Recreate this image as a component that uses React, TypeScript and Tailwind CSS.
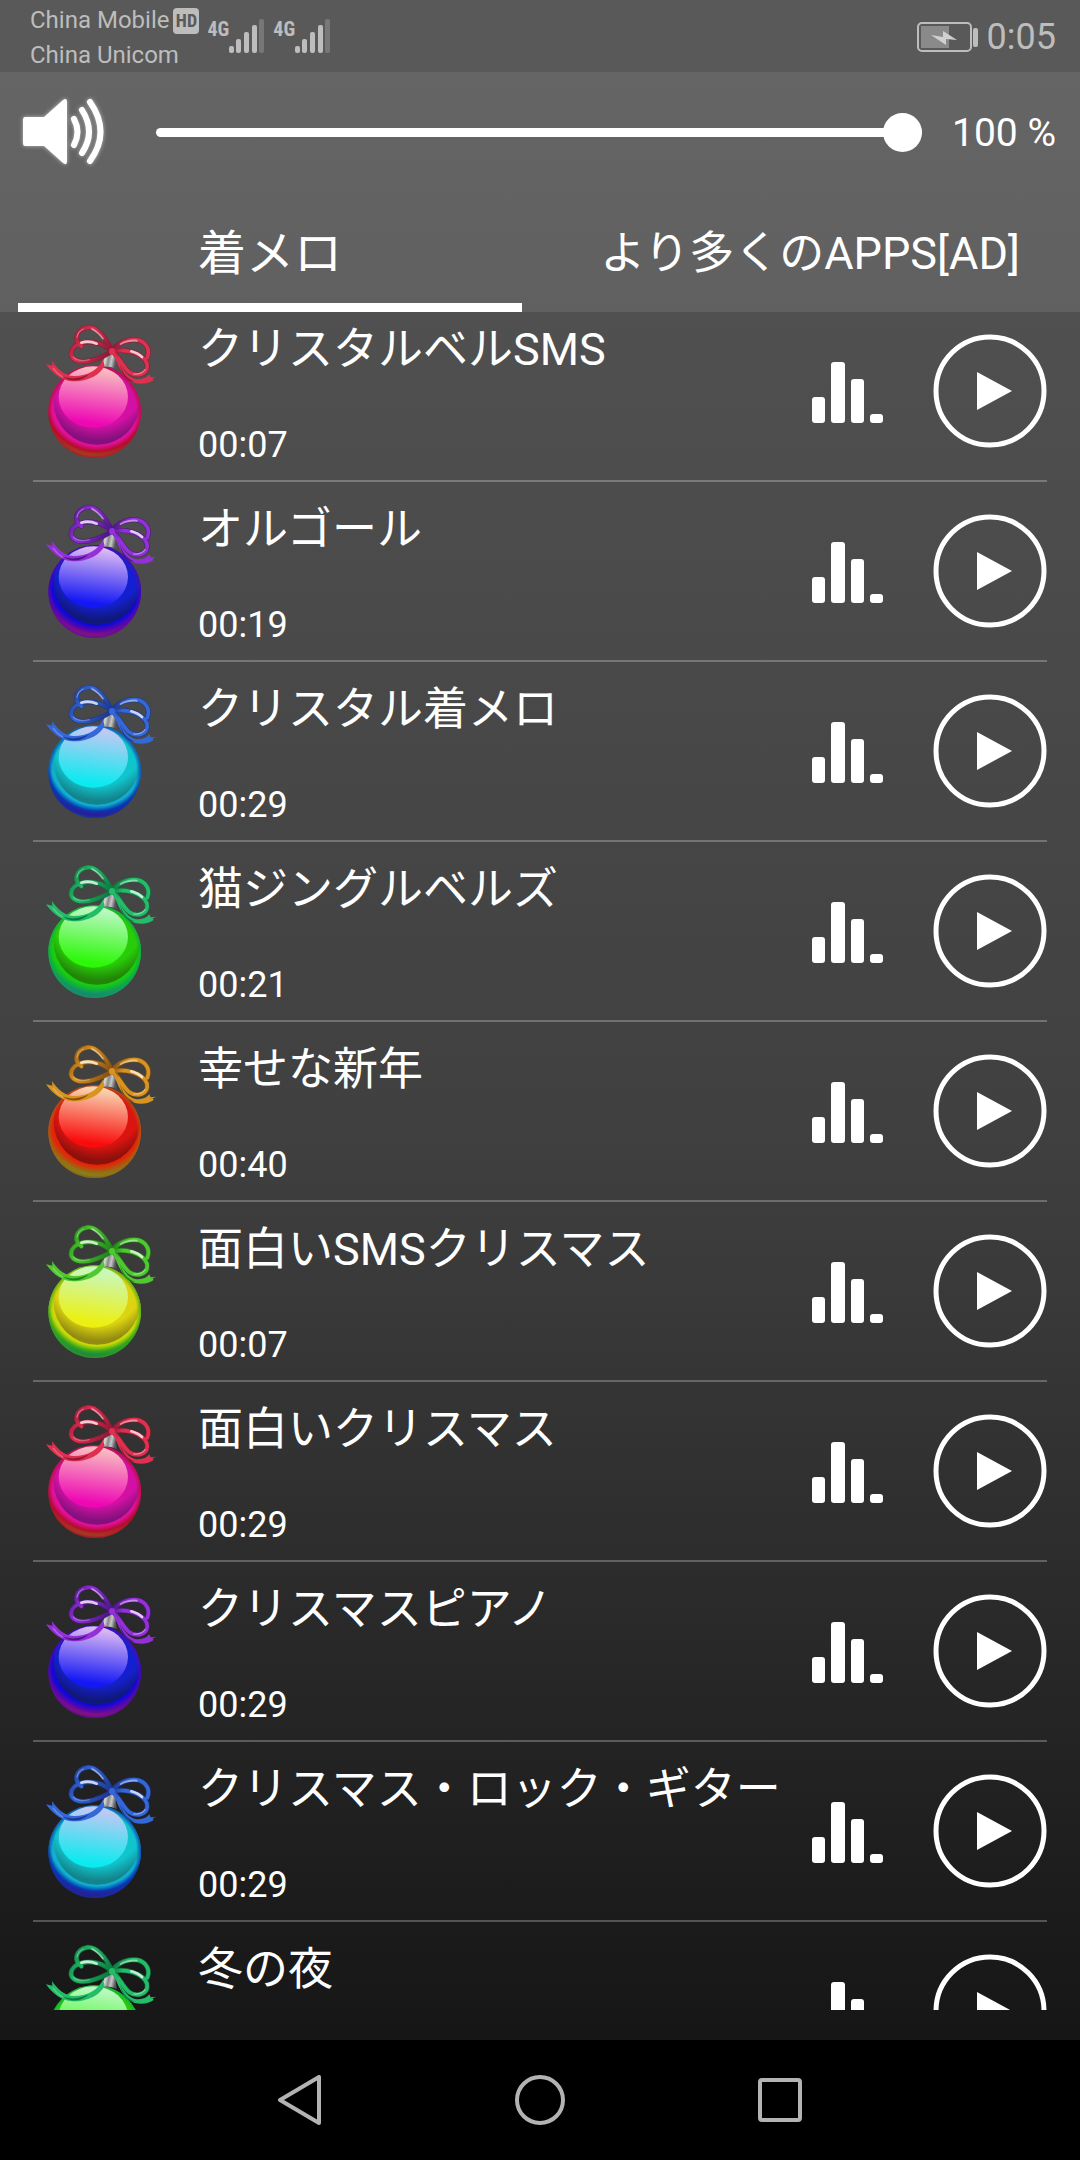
import { useId, useState } from "react";

interface Palette {
  ribbon: string;
  ribbonDark: string;
  shineTop: string;
  shineBottom: string;
  body: string;
  bodyDark: string;
  rim: string;
  rimMiddle: string;
  rimEdge: string;
}

const palettes: Record<string, Palette> = {
  pink: {
    ribbon: "#e0304f",
    ribbonDark: "#8e1836",
    shineTop: "#f9bcc0",
    shineBottom: "#ee08b4",
    body: "#d410a4",
    bodyDark: "#84107c",
    rim: "#e0109c",
    rimMiddle: "#b50c2c",
    rimEdge: "#9c5018",
  },
  blue: {
    ribbon: "#9430d8",
    ribbonDark: "#4a1684",
    shineTop: "#dcb8f4",
    shineBottom: "#1418f4",
    body: "#1420d0",
    bodyDark: "#101878",
    rim: "#1208d8",
    rimMiddle: "#5808a8",
    rimEdge: "#981470",
  },
  cyan: {
    ribbon: "#3468d8",
    ribbonDark: "#1c3690",
    shineTop: "#c4c8f4",
    shineBottom: "#0ceaf0",
    body: "#10c4cc",
    bodyDark: "#14848c",
    rim: "#10b0d0",
    rimMiddle: "#0838b0",
    rimEdge: "#3c1088",
  },
  green: {
    ribbon: "#24bc68",
    ribbonDark: "#0c7840",
    shineTop: "#bcf8c4",
    shineBottom: "#2cf808",
    body: "#28cc08",
    bodyDark: "#228408",
    rim: "#18cc10",
    rimMiddle: "#10a848",
    rimEdge: "#187c88",
  },
  red: {
    ribbon: "#d89420",
    ribbonDark: "#885010",
    shineTop: "#f8d4b0",
    shineBottom: "#fa0c0c",
    body: "#dc1410",
    bodyDark: "#8c100c",
    rim: "#e42408",
    rimMiddle: "#a85c10",
    rimEdge: "#6c9420",
  },
  yellow: {
    ribbon: "#50c830",
    ribbonDark: "#208418",
    shineTop: "#c8f8c0",
    shineBottom: "#ecf010",
    body: "#dcd410",
    bodyDark: "#948c10",
    rim: "#c8d808",
    rimMiddle: "#38a818",
    rimEdge: "#107c50",
  },
};

const ringtones = [
  { title: "クリスタルベルSMS", duration: "00:07", color: "pink" },
  { title: "オルゴール", duration: "00:19", color: "blue" },
  { title: "クリスタル着メロ", duration: "00:29", color: "cyan" },
  { title: "猫ジングルベルズ", duration: "00:21", color: "green" },
  { title: "幸せな新年", duration: "00:40", color: "red" },
  { title: "面白いSMSクリスマス", duration: "00:07", color: "yellow" },
  { title: "面白いクリスマス", duration: "00:29", color: "pink" },
  { title: "クリスマスピアノ", duration: "00:29", color: "blue" },
  { title: "クリスマス・ロック・ギター", duration: "00:29", color: "cyan" },
  { title: "冬の夜", duration: "00:29", color: "green" },
];

const bowLoops = [
  "M275 118 C256 76 228 46 202 49 C166 56 160 88 184 106",
  "M273 119 C236 84 174 86 156 116 C142 150 186 158 222 146 C246 138 264 130 274 121",
  "M277 118 C302 84 354 76 376 100 C390 116 386 130 382 140",
  "M278 121 C316 112 370 126 381 158 C387 190 350 200 326 182 C308 166 298 140 278 121",
];

const Ornament = ({ color }: { color: string }) => {
  const id = useId();
  const palette = palettes[color];

  return (
    <svg viewBox="60 30 360 420" className="h-[140px] w-[120px] shrink-0" aria-hidden="true">
      <defs>
        <radialGradient id={`${id}rim`} gradientUnits="userSpaceOnUse" cx="231" cy="262" r="178">
          <stop offset="0.66" stopColor={palette.rim} />
          <stop offset="0.8" stopColor={palette.rim} />
          <stop offset="0.89" stopColor={palette.rimMiddle} />
          <stop offset="0.97" stopColor={palette.rimEdge} />
          <stop offset="1" stopColor={palette.rimEdge} stopOpacity="0.6" />
        </radialGradient>
        <radialGradient id={`${id}side`} gradientUnits="userSpaceOnUse" cx="224" cy="302" r="140">
          <stop offset="0.9" stopColor={palette.rimMiddle} stopOpacity="0" />
          <stop offset="1" stopColor={palette.rimMiddle} stopOpacity="0.85" />
        </radialGradient>
        <radialGradient id={`${id}body`} gradientUnits="userSpaceOnUse" cx="236" cy="210" r="192">
          <stop offset="0.5" stopColor={palette.body} />
          <stop offset="0.7" stopColor={palette.body} />
          <stop offset="0.93" stopColor={palette.bodyDark} />
          <stop offset="1" stopColor={palette.bodyDark} />
        </radialGradient>
        <linearGradient id={`${id}shine`} x1="0.6" y1="0" x2="0.45" y2="1">
          <stop offset="0.05" stopColor={palette.shineTop} />
          <stop offset="0.92" stopColor={palette.shineBottom} />
        </linearGradient>
        <linearGradient id={`${id}cap`} x1="0" y1="0" x2="1" y2="0.2">
          <stop offset="0" stopColor="#6c6c74" />
          <stop offset="0.35" stopColor="#d8d8d4" />
          <stop offset="0.55" stopColor="#88888c" />
          <stop offset="0.75" stopColor="#c8c8c8" />
          <stop offset="1" stopColor="#55555c" />
        </linearGradient>
        <linearGradient id={`${id}ribbon`} gradientUnits="userSpaceOnUse" x1="150" y1="60" x2="390" y2="190">
          <stop offset="0" stopColor={palette.ribbonDark} />
          <stop offset="0.2" stopColor={palette.ribbon} />
          <stop offset="0.5" stopColor={palette.ribbonDark} />
          <stop offset="0.62" stopColor={palette.ribbon} />
          <stop offset="1" stopColor={palette.ribbon} />
        </linearGradient>
        <clipPath id={`${id}clip`}>
          <circle cx="224" cy="302" r="138" />
        </clipPath>
      </defs>
      <circle cx="224" cy="302" r="139" fill={`url(#${id}rim)`} />
      <g clipPath={`url(#${id}clip)`}>
        <circle cx="231" cy="272" r="130" fill={`url(#${id}body)`} />
        <path
          d="M112 325 A130 130 0 0 0 350 325"
          fill="none"
          stroke={palette.rim}
          strokeWidth="3"
          opacity="0.6"
        />
      </g>
      <circle cx="224" cy="302" r="139" fill={`url(#${id}side)`} />
      <ellipse cx="220" cy="258" rx="104" ry="92" fill={`url(#${id}shine)`} />
      <path d="M258 128 L286 130 L290 174 Q266 164 242 168 Z" fill={`url(#${id}cap)`} />
      <g fill="none" strokeLinecap="round">
        {bowLoops.map((d) => (
          <path key={d} d={d} stroke={palette.ribbonDark} strokeWidth="15" opacity="0.8" />
        ))}
        {bowLoops.map((d) => (
          <path key={d} d={d} stroke={`url(#${id}ribbon)`} strokeWidth="11" />
        ))}
      </g>
      <path
        d="M249 146 C232 180 198 196 160 195 C132 193 112 174 96 150 L97 164 L78 160 C98 188 124 209 156 211 C204 212 240 192 254 164 Z"
        fill={palette.ribbon}
      />
      <path
        d="M128 196 C150 206 180 204 206 190 C190 210 148 216 128 196 Z"
        fill={palette.ribbonDark}
      />
      <path
        d="M276 124 C292 150 300 196 342 215 C364 222 388 217 401 207 L398 202 L409 197 L392 199 L388 190 C376 206 352 208 336 200 C308 186 300 150 284 122 Z"
        fill={palette.ribbon}
      />
      <path d="M300 160 C308 188 322 204 344 212 C322 214 304 190 300 160 Z" fill={palette.ribbonDark} />
      <g fill="none" stroke="#ffffff" strokeLinecap="round">
        <path d="M184 95 C200 90 216 92 230 98" strokeWidth="8" opacity="0.75" />
        <path d="M334 121 C348 125 358 130 366 138" strokeWidth="8" opacity="0.75" />
        <path d="M216 54 C230 61 240 71 249 83" strokeWidth="5" opacity="0.5" />
        <path d="M302 99 C316 91 332 88 350 89" strokeWidth="6" opacity="0.45" />
        <path d="M171 78 C173 66 180 58 190 54" strokeWidth="4" opacity="0.35" />
        <path d="M160 138 C172 150 192 150 208 146" strokeWidth="4" opacity="0.25" />
        <path d="M342 189 C356 190 368 186 375 176" strokeWidth="4" opacity="0.4" />
        <path d="M100 172 C108 184 118 192 128 198" strokeWidth="4" opacity="0.25" />
      </g>
      <ellipse cx="276" cy="121" rx="9" ry="10" fill={palette.ribbon} />
    </svg>
  );
};

const Signal = () => (
  <div className="flex">
    <span className="font-['Liberation_Sans_Narrow','Roboto_Condensed',Roboto,sans-serif] text-xl leading-5 font-bold">
      4G
    </span>
    <svg viewBox="0 0 36 34" className="h-[34px] w-9" fill="currentColor" aria-hidden="true">
      <rect x="0" y="27" width="5" height="7" rx="2" />
      <rect x="7" y="20" width="5" height="14" rx="2" />
      <rect x="15" y="13" width="5" height="21" rx="2" />
      <rect x="23" y="6" width="5" height="28" rx="2" />
      <rect x="30" y="0" width="5" height="34" rx="2" opacity="0.3" />
    </svg>
  </div>
);

const StatusBar = () => (
  <div className="flex h-[72px] shrink-0 items-center justify-between bg-[#595959] pr-6 pl-[30px] text-[#bdbdbd]">
    <div className="flex items-center gap-2">
      <div className="pt-1 text-2xl leading-[35px]">
        <div className="flex items-center gap-1">
          China Mobile
          <span className="flex size-[26px] items-center justify-center rounded-sm bg-[#bdbdbd] font-['Liberation_Sans_Narrow','Roboto_Condensed',Roboto,sans-serif] text-lg font-bold text-[#595959]">
            HD
          </span>
        </div>
        <div>China Unicom</div>
      </div>
      <div className="flex gap-2">
        <Signal />
        <Signal />
      </div>
    </div>
    <div className="flex items-center gap-2 pt-[2px]">
      <svg viewBox="0 0 62 30" className="h-[30px] w-[62px]" aria-hidden="true">
        <rect x="1" y="1" width="53" height="28" rx="4" fill="none" stroke="currentColor" strokeWidth="2" />
        <rect x="4" y="4" width="28" height="22" fill="#8a8a8a" />
        <path d="M14 13 L26 15 V9 L40 18 L29 17 V23 Z" fill="#d0d0d0" />
        <rect x="56" y="6" width="5" height="19" rx="2" fill="currentColor" />
      </svg>
      <span className="text-4xl">0:05</span>
    </div>
  </div>
);

const VolumeControl = () => {
  const [volume, setVolume] = useState(100);

  return (
    <div className="flex h-[120px] items-center pr-6 pl-5">
      <svg viewBox="0 0 88 72" className="h-[72px] w-[88px] shrink-0 drop-shadow-[0_0_2px_#ffffff90]" aria-hidden="true">
        <path
          d="M5 21 H24 L43 4 Q47 1 47 6 V65 Q47 70 43 67 L24 50 H5 Q3 50 3 47 V24 Q3 21 5 21 Z"
          fill="#ffffff"
        />
        <g fill="none" stroke="#ffffff" strokeWidth="6" strokeLinecap="round">
          <path d="M54 23 Q61 36 54 49" />
          <path d="M62 14 Q76 36 62 57" />
          <path d="M70 6 Q91 36 70 65" />
        </g>
      </svg>
      <input
        type="range"
        min={0}
        max={100}
        value={volume}
        onChange={(e) => setVolume(Number(e.target.value))}
        aria-label="音量"
        className="mr-[30px] ml-12 h-[9px] min-w-0 flex-1 appearance-none rounded-full bg-white [&::-webkit-slider-thumb]:size-[39px] [&::-webkit-slider-thumb]:appearance-none [&::-webkit-slider-thumb]:rounded-full [&::-webkit-slider-thumb]:bg-white"
      />
      <span className="shrink-0 pt-[2px] text-[39px]">{volume} %</span>
    </div>
  );
};

const tabs = [
  { label: "着メロ", size: "text-5xl" },
  { label: "より多くのAPPS[AD]", size: "text-[45px]" },
];

const App = () => {
  const [activeTab, setActiveTab] = useState(0);

  return (
    <div
      lang="ja"
      className="flex h-screen flex-col overflow-hidden bg-black font-[Roboto,'Noto_Sans_CJK_JP',sans-serif] text-white"
    >
      <StatusBar />
      <header className="shrink-0 bg-linear-to-b from-[#656565] to-[#606060]">
        <VolumeControl />
        <div role="tablist" className="flex">
          {tabs.map(({ label, size }, index) => (
            <button
              key={label}
              type="button"
              role="tab"
              aria-selected={index === activeTab}
              onClick={() => setActiveTab(index)}
              className={`mx-[18px] h-[120px] flex-1 border-b-[9px] pt-3 whitespace-nowrap ${size} ${
                index === activeTab ? "border-white" : "border-transparent"
              }`}
            >
              {label}
            </button>
          ))}
        </div>
      </header>
      <main className="flex min-h-0 flex-1 flex-col bg-[linear-gradient(#505050,#404040_47%,#393939_57%,#1b1b1b_93%,#161616)] pb-[30px]">
        <div className="min-h-0 flex-1 overflow-hidden">
          <ul className="-mt-[10px] px-[33px]">
            {ringtones.map(({ title, duration, color }) => (
              <li key={title} className="flex h-[180px] items-center border-b-2 border-white/25 pl-[7px]">
                <Ornament color={color} />
                <div className="ml-[38px] flex min-w-0 flex-1 flex-col gap-[45px] self-start pt-5 whitespace-nowrap">
                  <h2 className="text-[45px] leading-[56px]">{title}</h2>
                  <p className="text-4xl leading-[44px]">{duration}</p>
                </div>
                <button type="button" aria-label={`${title} 設定`} className="shrink-0 pt-1">
                  <svg viewBox="0 0 72 62" className="h-[62px] w-[72px]" fill="currentColor" aria-hidden="true">
                    <rect x="0" y="35" width="13" height="26" rx="3" />
                    <rect x="19" y="0" width="14" height="61" rx="3" />
                    <rect x="39" y="17" width="13" height="44" rx="3" />
                    <rect x="58" y="52" width="13" height="9" rx="3" />
                  </svg>
                </button>
                <button type="button" aria-label={`${title} 再生`} className="ml-[49px] shrink-0">
                  <svg viewBox="0 0 114 114" className="size-[114px]" aria-hidden="true">
                    <circle cx="57" cy="57" r="54" fill="none" stroke="currentColor" strokeWidth="5" />
                    <path d="M44 38 L79 57 L44 76 Z" fill="currentColor" />
                  </svg>
                </button>
              </li>
            ))}
          </ul>
        </div>
      </main>
      <nav className="flex h-[120px] shrink-0 justify-center text-[#b3b3b3]">
        <button type="button" aria-label="戻る" className="flex w-60 items-center justify-center">
          <svg viewBox="0 0 50 50" className="size-[50px]" fill="none" stroke="currentColor" strokeWidth="4" strokeLinejoin="round" aria-hidden="true">
            <path d="M5 25 L44 2 V48 Z" />
          </svg>
        </button>
        <button type="button" aria-label="ホーム" className="flex w-60 items-center justify-center">
          <svg viewBox="0 0 50 50" className="size-[50px]" fill="none" stroke="currentColor" strokeWidth="4" aria-hidden="true">
            <circle cx="25" cy="25" r="23" />
          </svg>
        </button>
        <button type="button" aria-label="履歴" className="flex w-60 items-center justify-center">
          <svg viewBox="0 0 50 50" className="size-[50px]" fill="none" stroke="currentColor" strokeWidth="4" aria-hidden="true">
            <rect x="5" y="5" width="40" height="40" rx="2" />
          </svg>
        </button>
      </nav>
    </div>
  );
};

export default App;
